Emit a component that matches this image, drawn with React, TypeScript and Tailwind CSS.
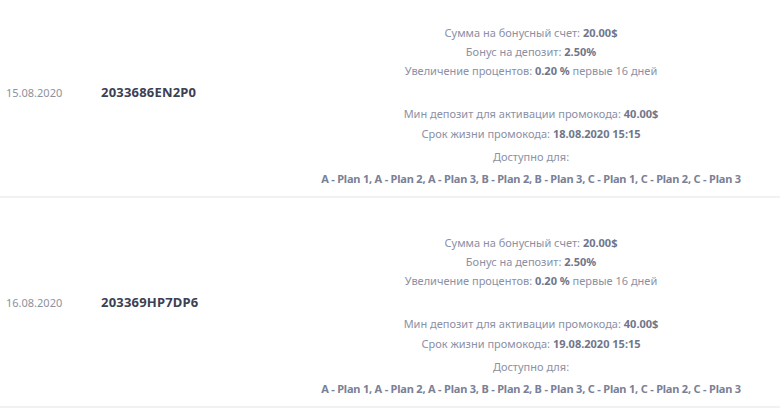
import React from 'react';

type Promo = {
  date: string;
  code: string;
  bonus: string;
  depositBonus: string;
  increase: string;
  days: number;
  minDeposit: string;
  expires: string;
  plans: string;
};

const PLANS = 'A - Plan 1, A - Plan 2, A - Plan 3, B - Plan 2, B - Plan 3, C - Plan 1, C - Plan 2, C - Plan 3';

const promos: Promo[] = [
  {
    date: '15.08.2020',
    code: '2033686EN2P0',
    bonus: '20.00$',
    depositBonus: '2.50%',
    increase: '0.20 %',
    days: 16,
    minDeposit: '40.00$',
    expires: '18.08.2020 15:15',
    plans: PLANS,
  },
  {
    date: '16.08.2020',
    code: '203369HP7DP6',
    bonus: '20.00$',
    depositBonus: '2.50%',
    increase: '0.20 %',
    days: 16,
    minDeposit: '40.00$',
    expires: '19.08.2020 15:15',
    plans: PLANS,
  },
];

const PromoRow: React.FC<{ promo: Promo }> = ({ promo }) => (
  <div className="flex items-center border-b-2 border-[#f1f1f3]">
    <div className="w-[101px] shrink-0 pl-[6px] pt-[2px] text-[11px] text-[#8e919b]">{promo.date}</div>
    <div className="w-[181px] shrink-0 pt-[2px] text-[13px] font-bold text-[#3b4054] tracking-[0.2px]">{promo.code}</div>

    {/* Details */}
    <div className="flex-1 pt-[35px] pb-[7px] text-center text-[11px] text-[#8b90a5]">
      <div className="leading-[19px]">
        Сумма на бонусный счет: <b className="font-bold text-[#6f768b]">{promo.bonus}</b>
      </div>
      <div className="leading-[19px]">
        Бонус на депозит: <b className="font-bold text-[#6f768b]">{promo.depositBonus}</b>
      </div>
      <div className="leading-[19px]">
        Увеличение процентов: <b className="font-bold text-[#6f768b]">{promo.increase}</b> первые {promo.days} дней
      </div>

      <div className="mt-[24px] leading-[20px]">
        Мин депозит для активации промокода: <b className="font-bold text-[#6f768b]">{promo.minDeposit}</b>
      </div>
      <div className="leading-[20px]">
        Срок жизни промокода: <b className="font-bold text-[#6f768b]">{promo.expires}</b>
      </div>
      <div className="mt-[3px] leading-[20px]">Доступно для:</div>
      <div className="mt-[2px] leading-[20px] text-[11px] font-bold tracking-[-0.2px] text-[#7a8096]">
        {promo.plans}
      </div>
    </div>
  </div>
);

export default function App() {
  return (
    <div
      className="w-[780px] h-[413px] overflow-hidden bg-white"
      style={{ fontFamily: '"Noto Sans", "Open Sans", sans-serif' }}
    >
      <div className="-mt-[12px]">
        {promos.map(p => (
          <PromoRow key={p.code} promo={p} />
        ))}
      </div>
    </div>
  );
}
